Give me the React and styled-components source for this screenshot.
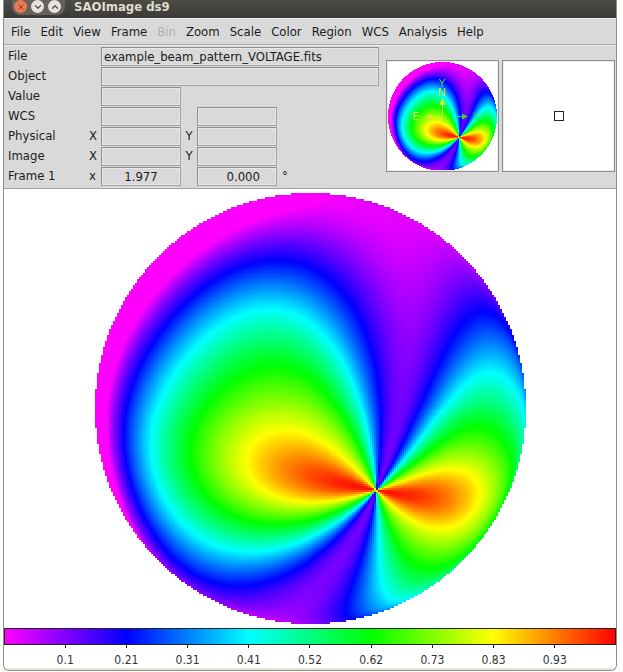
import React, { useEffect, useRef } from "react";
import styled, { createGlobalStyle } from "styled-components";
import { X, ChevronDown, ChevronUp } from "lucide-react";

const GlobalStyle = createGlobalStyle`
  * { box-sizing: border-box; }
  body {
    margin: 0;
    background: #fff;
    color: #1c1c1c;
    font-family: "DejaVu Sans Condensed", "DejaVu Sans", sans-serif;
    font-size: 13px;
    line-height: 16px;
  }
`;

/* ---------- beam pattern ---------- */

// Readings of the beam voltage along its contours. Each quadrant has its own
// origin; positions are converted to the unit disc (y grows downwards).
const DISC = 215;
const sample = (ox, oy, v, ...c) => {
  const out = [];
  for (let i = 0; i < c.length; i += 2) {
    out.push([(ox + c[i] / 3) / DISC, (oy + c[i + 1] / 3) / DISC, v]);
  }
  return out;
};
const nw = (v, ...c) => sample(-220, -220, v, ...c);
const ne = (v, ...c) => sample(-5, -220, v, ...c);
const sw = (v, ...c) => sample(-220, -3, v, ...c);
const se = (v, ...c) => sample(-5, -3, v, ...c);

const READINGS = [
  ...nw(0.02, 60, 640, 100, 500, 150, 400, 240, 270, 330, 195, 430, 135, 560, 85, 645, 75),
  ...nw(0.2, 108, 640, 140, 560, 200, 440, 270, 365, 330, 310, 420, 255, 500, 228, 570, 222, 645, 235),
  ...nw(0.4, 195, 650, 240, 550, 300, 480, 370, 420, 450, 385, 540, 370, 600, 378, 660, 415),
  ...nw(0.6, 370, 650, 420, 590, 500, 545, 560, 530, 620, 542),
  ...nw(0.7, 620, 650),
  ...ne(0.2, 0, 235, 60, 260, 110, 310, 160, 390, 195, 470, 215, 560, 226, 650),
  ...ne(0.2, 340, 640, 380, 560, 430, 480, 480, 415, 530, 385, 570, 395, 610, 430),
  ...ne(0.4, 0, 405, 60, 455, 110, 510, 150, 590, 178, 650),
  ...ne(0.4, 440, 640, 480, 590, 530, 560, 575, 555, 610, 575, 645, 640),
  ...ne(0.6, 0, 545, 60, 590, 100, 650),
  ...ne(0.08, 300, 300, 300, 400, 200, 200, 450, 210),
  ...ne(0.08, 285, 550, 290, 640, 295, 480),
  ...ne(0.035, 290, 200),
  ...ne(0.01, 300, 130, 430, 160, 200, 70),
  ...ne(0.11, 0, 150, 400, 300),
  ...ne(0.13, 480, 300),
  ...ne(0.1, 550, 300),
  ...ne(0.5, 570, 640),
  ...sw(0.02, 55, 50, 60, 130, 75, 235),
  ...sw(0.2, 105, 0, 100, 100, 110, 180, 150, 290, 200, 390, 270, 460, 350, 520, 430, 547, 500, 545, 580, 520, 645, 477),
  ...sw(0.4, 195, 0, 180, 100, 190, 190, 230, 290, 300, 370, 380, 425, 460, 450, 540, 445, 600, 425, 645, 400),
  ...sw(0.6, 350, 0, 315, 80, 310, 150, 330, 230, 380, 300, 450, 350, 530, 368, 600, 358, 645, 342),
  ...sw(0.8, 645, 75, 600, 78, 530, 100, 480, 150, 475, 190, 500, 240, 560, 275, 620, 292, 645, 296),
  ...sw(0.7, 560, 0, 400, 130),
  ...sw(0.87, 560, 185),
  ...sw(0.93, 640, 210),
  ...sw(0.06, 500, 632, 580, 640),
  ...sw(0.08, 650, 570, 640, 620),
  ...sw(0.1, 330, 560, 230, 475),
  ...sw(0.04, 130, 365),
  ...se(0.2, 224, 0, 222, 100, 216, 200, 340, 0, 310, 60, 270, 150, 235, 215),
  ...se(0.4, 178, 0, 190, 80, 203, 180, 405, 20, 350, 85, 290, 165, 240, 225),
  ...se(0.6, 100, 0, 130, 80, 170, 170, 195, 222),
  ...se(0.8, 0, 75, 60, 100, 120, 150, 170, 208, 0, 298, 80, 285, 150, 270),
  ...se(0.94, 0, 210),
  ...se(0.97, 80, 228, 120, 236, 330, 280),
  ...se(0.99, 150, 243, 185, 249, 245, 262, 265, 267, 290, 270),
  ...se(0.6, 0, 345, 80, 320, 150, 285),
  ...se(0.4, 0, 405, 70, 360, 140, 310),
  ...se(0.2, 0, 475, 60, 430, 120, 370, 170, 310),
  ...se(0.08, 280, 0, 275, 30, 110, 470, 60, 520, 0, 600),
  ...se(0.1, 255, 100, 240, 170, 155, 400, 175, 350),
  ...se(0.2, 115, 600, 135, 520, 165, 420, 190, 340, 205, 290),
  ...se(0.4, 250, 570, 228, 450, 218, 370, 215, 310, 300, 585),
  ...se(0.3, 190, 560, 200, 600),
  ...se(0.6, 235, 320, 255, 380, 290, 440, 350, 487, 410, 480, 460, 455, 520, 405, 570, 340, 605, 250, 615, 180, 610, 120, 590, 80, 550, 60, 500, 70, 420, 108, 340, 160, 280, 205),
  ...se(0.8, 270, 235, 340, 205, 410, 190, 470, 195, 505, 220, 512, 260, 500, 310, 460, 355, 410, 380, 360, 375, 310, 340, 260, 295),
  ...se(0.91, 410, 280),
  ...se(0.86, 450, 250),
  ...se(0.72, 550, 250),
  ...se(0.52, 540, 400),
  ...se(0.45, 440, 500, 380, 540),
  ...se(0.38, 650, 20),
  ...se(0.52, 635, 190),
];

const POLE_X = 66 / DISC;
const POLE_Y = 82 / DISC;
const POLE_Z = Math.sqrt(1 - POLE_X * POLE_X - POLE_Y * POLE_Y);
const E1_LEN = Math.hypot(POLE_Z, POLE_X);
const E1 = [POLE_Z / E1_LEN, 0, -POLE_X / E1_LEN];
const E2 = [
  POLE_Y * E1[2],
  POLE_Z * E1[0] - POLE_X * E1[2],
  -POLE_Y * E1[0],
];

// Spatial polynomials times harmonics of the bearing around the pole.
function basis(x, y) {
  const z = Math.sqrt(Math.max(0, 1 - x * x - y * y));
  const bearing = Math.atan2(
    x * E2[0] + y * E2[1] + z * E2[2],
    x * E1[0] + y * E1[1] + z * E1[2]
  );
  const full = [1, x, y, z, x * x, x * y, y * y, z * x, z * y, x * x * x, x * x * y, x * y * y, y * y * y];
  const terms = full.slice();
  [[2, 9], [4, 7], [6, 3]].forEach(([order, count]) => {
    const c = Math.cos(order * bearing);
    const s = Math.sin(order * bearing);
    for (let i = 0; i < count; i++) terms.push(full[i] * c, full[i] * s);
  });
  return terms;
}

function fitBeam(readings) {
  const rows = readings.map(([x, y]) => basis(x, y));
  const n = rows[0].length;
  const m = Array.from({ length: n }, (_, i) => {
    const r = new Float64Array(n + 1);
    r[i] = 0.003;
    return r;
  });
  rows.forEach((row, k) => {
    for (let i = 0; i < n; i++) {
      for (let j = 0; j < n; j++) m[i][j] += row[i] * row[j];
      m[i][n] += row[i] * readings[k][2];
    }
  });
  for (let i = 0; i < n; i++) {
    for (let r = i + 1; r < n; r++) {
      const f = m[r][i] / m[i][i];
      for (let j = i; j <= n; j++) m[r][j] -= f * m[i][j];
    }
  }
  const w = new Float64Array(n);
  for (let i = n - 1; i >= 0; i--) {
    let v = m[i][n];
    for (let j = i + 1; j < n; j++) v -= m[i][j] * w[j];
    w[i] = v / m[i][i];
  }
  return w;
}

const WEIGHTS = fitBeam(READINGS);

// Magenta at 0 through blue, cyan, green and yellow to red at 1.
function colour(v) {
  const h = 5 * (1 - Math.min(1, Math.max(0, v)));
  const channel = (k) => {
    const d = Math.abs(((h - k + 9) % 6) - 3);
    return Math.round(255 * Math.min(1, Math.max(0, 2 - d)));
  };
  return [channel(0), channel(2), channel(4)];
}

function BeamCanvas({ cells }) {
  const ref = useRef(null);
  useEffect(() => {
    const ctx = ref.current.getContext("2d");
    const img = ctx.createImageData(cells, cells);
    for (let j = 0; j < cells; j++) {
      for (let i = 0; i < cells; i++) {
        const x = (2 * i + 1) / cells - 1;
        const y = (2 * j + 1) / cells - 1;
        if (x * x + y * y > 1) continue;
        const b = basis(x, y);
        let v = 0;
        for (let k = 0; k < b.length; k++) v += b[k] * WEIGHTS[k];
        const [r, g, bl] = colour(v);
        const o = (j * cells + i) * 4;
        img.data[o] = r;
        img.data[o + 1] = g;
        img.data[o + 2] = bl;
        img.data[o + 3] = 255;
      }
    }
    ctx.putImageData(img, 0, 0);
  }, [cells]);
  return <Plot ref={ref} width={cells} height={cells} role="img" aria-label="Beam pattern" />;
}

const Plot = styled.canvas`
  display: block;
  width: 100%;
  height: auto;
  image-rendering: pixelated;
`;

/* ---------- window ---------- */

const Window = styled.div`
  margin: 0 6px 0 3px;
  border: solid #8f8d88;
  border-width: 0 1px 1px;
  border-radius: 0 0 6px 6px;
  background: #fff;
  overflow: hidden;
`;

const TitleBar = styled.header`
  display: flex;
  align-items: flex-start;
  gap: 9px;
  height: 18px;
  padding-left: 8px;
  background: linear-gradient(#4d4b46, #3b3a36);
`;

const WindowButtons = styled.div`
  display: flex;
  gap: 4px;
  padding: 0 4px 2px 2px;
  border-radius: 0 0 8px 8px;
  background: #65625b;
`;

const RoundButton = styled.button`
  display: grid;
  place-items: center;
  width: 13px;
  height: 13px;
  padding: 0;
  border: 0;
  border-radius: 50%;
  background: ${(p) => (p.$close ? "#ee7a54" : "#e6e3de")};
  color: ${(p) => (p.$close ? "#8a3a22" : "#55524c")};
`;

const Title = styled.h1`
  margin: 0;
  font: bold 13px/14px "DejaVu Sans Condensed", "DejaVu Sans", sans-serif;
  color: #e0dcd0;
`;

const MenuBar = styled.nav`
  display: flex;
  gap: 10px;
  height: 27px;
  padding: 4px 7px;
  background: #d9d9d9;
  border-top: 1px solid #f2f2f2;
  border-bottom: 1px solid #a8a8a8;
`;

const MenuButton = styled.button`
  padding: 0;
  border: 0;
  background: none;
  font: inherit;
  line-height: 17px;
  color: inherit;
  &:disabled { color: #b0b0b0; }
`;

const InfoPanel = styled.section`
  display: flex;
  justify-content: space-between;
  height: 144px;
  padding: 0 1px 0 4px;
  background: #d9d9d9;
  border-top: 1px solid #ececec;
  border-bottom: 1px solid #a3a3a3;
`;

const Fields = styled.div`
  flex: 1;
  max-width: 371px;
  display: grid;
  grid-template-columns: 81px 12px 80px 16px 80px 1fr;
  grid-auto-rows: 20px;
  align-items: center;
`;

const Name = styled.label`
  grid-column: ${(p) => (p.$wide ? "1 / span 2" : "1")};
`;

const Axis = styled.label`
  text-align: ${(p) => (p.$mid ? "center" : "left")};
`;

const Entry = styled.input`
  grid-column: ${(p) => p.$col};
  width: 100%;
  min-width: 0;
  height: 19px;
  padding: 0 ${(p) => (p.$align === "right" ? 16 : 2)}px 0 2px;
  border: 1px solid;
  border-color: #8e8e8e #a2a2a2 #a2a2a2 #8e8e8e;
  outline: 1px solid #e8e8e8;
  outline-offset: -2px;
  border-radius: 0;
  background: #d9d9d9;
  font: inherit;
  color: inherit;
  text-align: ${(p) => p.$align || "left"};
`;

const Unit = styled.span`
  padding-left: 5px;
`;

const Previews = styled.div`
  display: flex;
  gap: 3px;
  padding-top: 14px;
`;

const Preview = styled.div`
  position: relative;
  display: grid;
  place-items: center;
  width: 113px;
  height: 112px;
  border: 1px solid #8e8e8e;
  outline: 1px solid #ededed;
  outline-offset: -2px;
  background: #fff;
`;

const PannerImage = styled.div`
  width: 109px;
`;

const Compass = styled.svg`
  position: absolute;
  inset: 0;
  width: 100%;
  height: 100%;
  font: 11px "DejaVu Sans", sans-serif;
`;

const Cursor = styled.div`
  width: 10px;
  height: 10px;
  border: 1px solid #222;
`;

const Frame = styled.main`
  display: grid;
  place-items: center;
  padding: 4px 0;
`;

const FrameImage = styled.div`
  width: 431px;
  max-width: 100%;
`;

const ColourBar = styled.div`
  height: 17px;
  border: 1px solid #222;
  background: linear-gradient(90deg, #f0f, #00f 20%, #0ff 40%, #0f0 60%, #ff0 80%, #f00);
`;

const Scale = styled.ol`
  display: grid;
  grid-template-columns: repeat(9, 1fr);
  margin: 0;
  padding: 0 5%;
  height: 23px;
  list-style: none;
`;

const Tick = styled.li`
  display: flex;
  flex-direction: column;
  align-items: center;
  gap: 4px;
  font-size: 12px;
  color: #333;
  &::before {
    content: "";
    width: 1px;
    height: 3px;
    background: #222;
  }
`;

const Foot = styled.div`
  height: 2px;
  background: #e6e3da;
`;

const MENUS = ["File", "Edit", "View", "Frame", "Bin", "Zoom", "Scale", "Color", "Region", "WCS", "Analysis", "Help"];
const LEVELS = ["0.1", "0.21", "0.31", "0.41", "0.52", "0.62", "0.73", "0.83", "0.93"];

function AxisRow({ id, name, x, y, first = "", second = "", unit = "" }) {
  return (
    <>
      <Name htmlFor={id + "-x"}>{name}</Name>
      <Axis htmlFor={id + "-x"}>{x}</Axis>
      <Entry id={id + "-x"} $col="3" $align="center" readOnly value={first} />
      <Axis $mid htmlFor={id + "-y"}>{y}</Axis>
      <Entry id={id + "-y"} $col="5" $align="right" readOnly value={second} aria-label={name + " second value"} />
      <Unit>{unit}</Unit>
    </>
  );
}

export default function App() {
  return (
    <>
      <GlobalStyle />
      <Window>
        <TitleBar>
          <WindowButtons>
            <RoundButton $close aria-label="Close"><X size={8} strokeWidth={3} /></RoundButton>
            <RoundButton aria-label="Minimize"><ChevronDown size={10} strokeWidth={3} /></RoundButton>
            <RoundButton aria-label="Maximize"><ChevronUp size={10} strokeWidth={3} /></RoundButton>
          </WindowButtons>
          <Title>SAOImage ds9</Title>
        </TitleBar>
        <MenuBar>
          {MENUS.map((m) => (
            <MenuButton key={m} disabled={m === "Bin"}>{m}</MenuButton>
          ))}
        </MenuBar>
        <InfoPanel>
          <Fields>
            <Name $wide htmlFor="file">File</Name>
            <Entry id="file" $col="3 / -1" readOnly value="example_beam_pattern_VOLTAGE.fits" />
            <Name $wide htmlFor="object">Object</Name>
            <Entry id="object" $col="3 / -1" readOnly value="" />
            <Name $wide htmlFor="value">Value</Name>
            <Entry id="value" $col="3" readOnly value="" />
            <AxisRow id="wcs" name="WCS" />
            <AxisRow id="physical" name="Physical" x="X" y="Y" />
            <AxisRow id="image" name="Image" x="X" y="Y" />
            <AxisRow id="frame" name="Frame 1" x="x" first="1.977" second="0.000" unit="°" />
          </Fields>
          <Previews>
            <Preview>
              <PannerImage><BeamCanvas cells={109} /></PannerImage>
              <Compass viewBox="0 0 111 110">
                <g fill="#3fd23a" stroke="none">
                  <text x="55" y="26" textAnchor="middle">Y</text>
                  <text x="89" y="59" textAnchor="middle" opacity="0.6">X</text>
                  <path d="M81 55.500l-6-3v6z" />
                </g>
                <path d="M70 55.500h6" stroke="#3fd23a" fill="none" />
                <g fill="#d8e832">
                  <text x="55" y="35" textAnchor="middle">N</text>
                  <text x="29" y="59" textAnchor="middle">E</text>
                  <path d="M55.500 37l-3 7h6zM38 55.500l7-3v6z" />
                </g>
                <path d="M55.500 43v12.500H44" stroke="#d8e832" fill="none" />
              </Compass>
            </Preview>
            <Preview><Cursor /></Preview>
          </Previews>
        </InfoPanel>
        <Frame>
          <FrameImage><BeamCanvas cells={216} /></FrameImage>
        </Frame>
        <ColourBar role="img" aria-label="Colour scale" />
        <Scale>
          {LEVELS.map((l) => <Tick key={l}>{l}</Tick>)}
        </Scale>
        <Foot />
      </Window>
    </>
  );
}
